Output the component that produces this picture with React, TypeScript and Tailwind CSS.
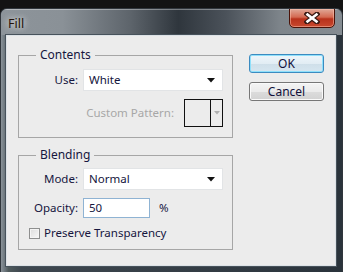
import React from "react";

function CloseX() {
  return (
    <svg width="16" height="12" viewBox="0 0 16 12">
      <path d="M3 2 L13 10 M13 2 L3 10" stroke="#3a1a14" strokeWidth="5" strokeLinecap="square" />
      <path d="M3.5 2.5 L12.5 9.5 M12.5 2.5 L3.5 9.5" stroke="#ffffff" strokeWidth="2.6" strokeLinecap="square" />
    </svg>
  );
}

function SelectBox({ value }: { value: string }) {
  return (
    <div className="w-[140px] h-[22px] bg-white border border-[#e2e4e6] flex items-center justify-between pl-[5px] pr-[7px]">
      <span className="text-[11.5px] text-[#14143c]">{value}</span>
      <svg width="8" height="5" viewBox="0 0 8 5">
        <path d="M0 0 H8 L4 4.5 Z" fill="#111" />
      </svg>
    </div>
  );
}

export default function App() {
  return (
    <div className="w-[343px] h-[272px] bg-[#131313] pt-[8px] overflow-hidden font-['Noto_Sans',sans-serif]">
      <div className="h-[264px] rounded-t-[7px] border-t border-x border-[#30363c] bg-[linear-gradient(to_right,#8a9299_0%,#6a747a_1.2%,#4f5a5c_2.2%,#3e474f_6%,#333c44_60%,#2a333b_100%)] flex flex-col overflow-hidden">
        {/* Title bar */}
        <div className="h-[26px] flex items-start justify-between bg-[linear-gradient(to_right,#8d949a_0%,#8a9197_18%,#5d646b_38%,#2f363d_52%,#4b525a_66%,#7e858b_82%,#858c92_100%)] shadow-[inset_0_1px_0_rgba(255,255,255,0.35)]">
          <span className="ml-[7px] mt-[7px] text-[12.5px] leading-[16px] text-[#241208] [text-shadow:0_0_6px_rgba(255,255,255,0.9),0_0_10px_rgba(255,255,255,0.6)]">
            Fill
          </span>
          <div className="mr-[7px] -mt-[1px] w-[46px] h-[20px] rounded-b-[5px] border border-[#4a1208] bg-[linear-gradient(to_bottom,#e0a898_0%,#d46a52_45%,#b8321c_55%,#c8482e_100%)] shadow-[inset_0_0_0_1px_rgba(255,200,180,0.5)] flex items-center justify-center">
            <CloseX />
          </div>
        </div>
        {/* Body */}
        <div className="flex-1 pl-[5px] pr-[6px] pb-[6px]">
          <div className="h-full border border-[#dde2e6] bg-[#ececec] outline outline-1 outline-[#47525b] flex items-start text-[11.5px] text-[#16163e]">
            {/* Left column: groups */}
            <div className="ml-[11px] mt-[11px] w-[215px] flex flex-col gap-[9px]">
              <fieldset className="border border-[#a6a6a6] p-0 m-0">
                <legend className="ml-[17px] px-[4px] leading-[16px] text-[12px]">Contents</legend>
                <div className="pt-[6px] pb-[10px] flex flex-col gap-[8px]">
                  <div className="flex items-center">
                    <span className="w-[59px] text-right">Use:</span>
                    <div className="ml-[5px]">
                      <SelectBox value="White" />
                    </div>
                  </div>
                  <div className="flex items-center justify-end pr-[9px]">
                    <span className="text-[#a7a7a7] mr-[10px]">Custom Pattern:</span>
                    <div className="w-[39px] h-[28px] border border-[#111] flex bg-[#ececec]">
                      <div className="flex-1 border-r border-[#111]" />
                      <div className="w-[11px] flex items-center justify-center">
                        <svg width="6" height="4" viewBox="0 0 6 4">
                          <path d="M0 0 H6 L3 3.5 Z" fill="#b0b0b0" />
                        </svg>
                      </div>
                    </div>
                  </div>
                </div>
              </fieldset>
              <fieldset className="border border-[#a6a6a6] p-0 m-0">
                <legend className="ml-[17px] px-[4px] leading-[16px] text-[12px]">Blending</legend>
                <div className="pt-[5px] pb-[9px] flex flex-col">
                  <div className="flex items-center">
                    <span className="w-[59px] text-right">Mode:</span>
                    <div className="ml-[5px]">
                      <SelectBox value="Normal" />
                    </div>
                  </div>
                  <div className="flex items-center mt-[8px]">
                    <span className="w-[59px] text-right">Opacity:</span>
                    <div className="ml-[5px] w-[67px] h-[20px] bg-white border border-[#8fb3d3] flex items-center pl-[5px]">
                      50
                    </div>
                    <span className="ml-[9px]">%</span>
                  </div>
                  <div className="flex items-center mt-[8px] pl-[10px]">
                    <div className="w-[11px] h-[11px] border border-[#8e8f8f] bg-[linear-gradient(135deg,#dcdcdc,#f8f8f8)] shadow-[inset_0_0_0_1px_#f4f4f4]" />
                    <span className="ml-[4px] leading-[14px]">Preserve Transparency</span>
                  </div>
                </div>
              </fieldset>
            </div>
            {/* Right column: buttons */}
            <div className="ml-[16px] mt-[18px] w-[75px] flex flex-col gap-[9px]">
              <div className="h-[19px] rounded-[3px] border border-[#3c8bc0] shadow-[inset_0_0_0_1px_#8fe0fb] bg-[linear-gradient(to_bottom,#eef6fb_0%,#e2edf4_50%,#cfdfe9_51%,#d6e6f0_100%)] flex items-center justify-center text-[12px] text-[#10103a]">
                OK
              </div>
              <div className="h-[19px] rounded-[3px] border border-[#777] shadow-[inset_0_0_0_1px_#fafafa] bg-[linear-gradient(to_bottom,#f4f4f4_0%,#ebebeb_50%,#dcdcdc_51%,#d2d2d2_100%)] flex items-center justify-center text-[12px] text-[#10103a]">
                Cancel
              </div>
            </div>
          </div>
        </div>
      </div>
    </div>
  );
}
